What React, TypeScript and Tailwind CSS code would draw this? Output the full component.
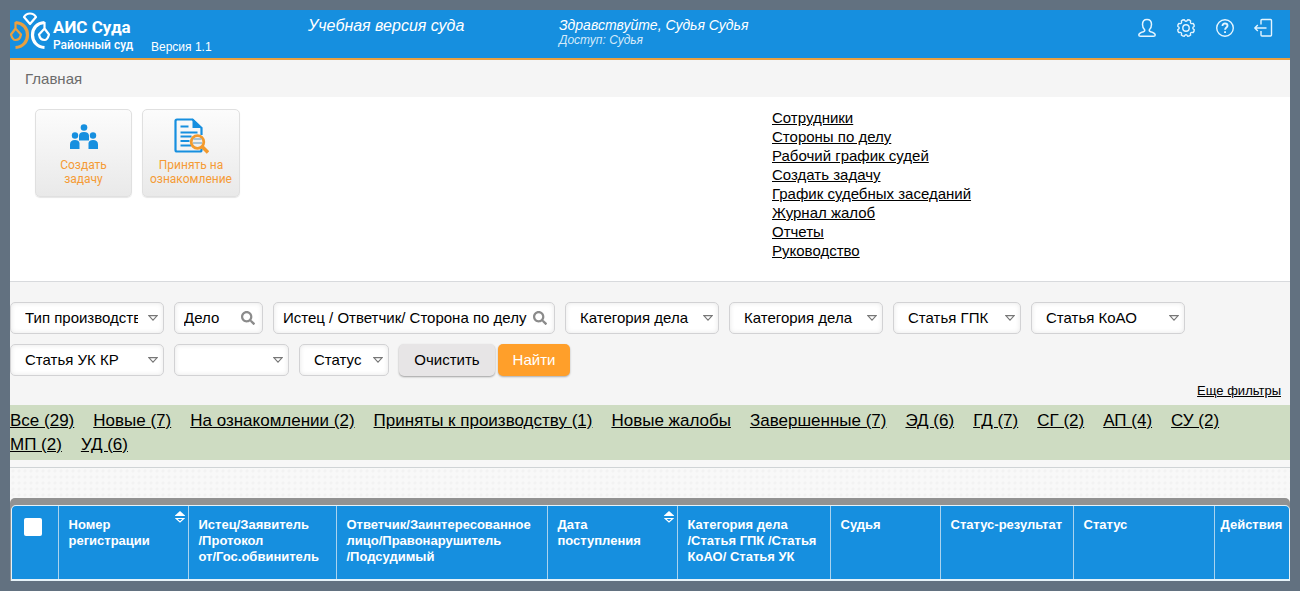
import React from "react";
import { FaSearch } from "react-icons/fa";

function Logo() {
  return (
    <svg viewBox="0 0 40 40" className="h-10 w-10 shrink-0" fill="none" strokeWidth="2.2" aria-hidden="true">
      <g stroke="#fff">
        <path d="M14 7q2-3.500 6-3.500T26 7l-6 7z" strokeLinejoin="round" />
        <path d="M34.500 12.500C27 13 22.500 18 22.500 25c0 6.500 4.500 12 12 12.500" strokeWidth="3.200" />
        <path d="M34.500 12v6.500l-5.500 6q1 5.500 5.500 5.500 3 0 4.500-5.500l-4.500-6" strokeLinejoin="round" />
      </g>
      <g stroke="#e9a040">
        <path d="M5.500 12.500C13 13 17.500 18 17.500 25c0 6.500-4.500 12-12 12.500" strokeWidth="3.200" />
        <path d="M5.500 12v6.500l5.500 6q-1 5.500-5.500 5.500-3 0-4.500-5.500l4.500-6" strokeLinejoin="round" />
      </g>
    </svg>
  );
}

const iconBox = "h-5 w-5";

function UserIcon() {
  return (
    <svg viewBox="0 0 20 20" className={iconBox} fill="none" stroke="currentColor" strokeWidth="1.500" strokeLinejoin="round" aria-hidden="true">
      <path d="M10 1.500C7 1.500 5.500 3.500 5.500 6.500c0 2.300.9 4.400 2.300 5.500.1 1-.3 1.400-1.300 1.700-2.700.8-4.700 1.500-4.700 3.300 0 .8.700 1.300 1.700 1.300h13c1 0 1.700-.5 1.700-1.300 0-1.800-2-2.500-4.700-3.300-1-.3-1.400-.7-1.300-1.700 1.400-1.100 2.300-3.200 2.300-5.500 0-3-1.500-5-4.500-5z" />
    </svg>
  );
}

function gearPath() {
  const parts: string[] = [];
  for (let i = 0; i < 8; i++) {
    const at = (deg: number, r: number) => {
      const a = ((i * 45 + deg + 22.5) * Math.PI) / 180;
      return `${(10 + r * Math.cos(a)).toFixed(2)} ${(10 + r * Math.sin(a)).toFixed(2)}`;
    };
    parts.push(`${i === 0 ? "M" : "L"}${at(-11, 8.4)} Q${at(0, 9)} ${at(11, 8.4)} Q${at(14, 6.8)} ${at(22.5, 6.8)} Q${at(31, 6.8)} ${at(34, 8.4)}`);
  }
  return parts.join(" ") + "Z";
}

function GearIcon() {
  return (
    <svg viewBox="0 0 20 20" className={iconBox} fill="none" stroke="currentColor" strokeWidth="1.400" strokeLinejoin="round" aria-hidden="true">
      <path d={gearPath()} />
      <circle cx="10" cy="10" r="3.200" />
    </svg>
  );
}

function HelpIcon() {
  return (
    <svg viewBox="0 0 20 20" className={iconBox} fill="none" stroke="currentColor" aria-hidden="true">
      <circle cx="10" cy="10" r="8.300" strokeWidth="1.400" />
      <path d="M7.500 8c0-1.600 1-2.500 2.500-2.500s2.500.9 2.500 2.200c0 1.800-2.400 1.900-2.400 4" strokeWidth="1.900" />
      <path d="M9.100 13.200h1.900v1.700h-1.900z" fill="currentColor" stroke="none" />
    </svg>
  );
}

function ExitIcon() {
  return (
    <svg viewBox="0 0 20 20" className={iconBox} fill="none" stroke="currentColor" strokeWidth="1.400" strokeLinejoin="round" aria-hidden="true">
      <path d="M7 6.500V2.500Q7 1.500 8 1.500h8.500q1 0 1 1v14.500q0 1-1 1H8q-1 0-1-1v-4" />
      <path d="M12.500 10H.800M3.800 7l-3 3 3 3" />
    </svg>
  );
}

function TeamIcon() {
  return (
    <svg viewBox="0 0 28 25" className="h-[25px] w-7" fill="#168fdf" aria-hidden="true">
      <circle cx="14" cy="3.500" r="3.300" />
      <path d="M9 16.500V12q0-4 5-4t5 4v4.500z" />
      <circle cx="5" cy="11.500" r="3.200" />
      <circle cx="23" cy="11.500" r="3.200" />
      <path d="M0 25v-4.500q0-4.500 5-4.500 4 0 4.500 3V25zM28 25v-4.500q0-4.500-5-4.500-4 0-4.500 3V25z" />
    </svg>
  );
}

function ReviewIcon() {
  return (
    <svg viewBox="0 0 36 36" className="h-9 w-9" fill="none" aria-hidden="true">
      <path d="M28.500 17V10l-9-8.500H4q-1.500 0-1.500 1.500v29q0 1.500 1.500 1.500h23q1.500 0 1.500-1.500v-1.500" stroke="#168fdf" strokeWidth="2.200" strokeLinejoin="round" />
      <path d="M19.500 0.500v9.500h10z" fill="#168fdf" />
      <path d="M7.500 8.500h8M7.500 14.500h17M7.500 18.500h11M7.500 23h9M7.500 27.500h11" stroke="#168fdf" strokeWidth="2" />
      <circle cx="24.500" cy="24" r="6.300" fill="#f0f0f0" stroke="#f39a2d" strokeWidth="2.800" />
      <path d="M29 28.500l6 6" stroke="#f39a2d" strokeWidth="3.600" />
      <path d="M20.500 21h8M20 25h9" stroke="#8fb4cc" strokeWidth="1.400" />
    </svg>
  );
}

function SortIcon() {
  return (
    <svg viewBox="0 0 10 12" className="h-3 w-2.5" aria-hidden="true">
      <path d="M5 0l5 4.500v.5H0v-.5z" fill="#fff" />
      <path d="M1.200 7.500h7.600L5 11z" fill="none" stroke="#fff" strokeWidth="1.200" />
    </svg>
  );
}

const fieldBox =
  "h-8 w-full rounded-[5px] border border-[#d2d2d4] bg-white text-[15px] text-black shadow-[inset_0_0_5px_rgba(0,0,0,0.1)] outline-none";

function SelectField({ label, text, width }: { label: string; text: string; width: string }) {
  return (
    <div className={`relative ${width}`}>
      <select aria-label={label} className={`${fieldBox} appearance-none pl-3.5 pr-[25px]`}>
        <option>{text}</option>
      </select>
      <svg viewBox="0 0 10 6" className="pointer-events-none absolute top-[13px] right-1.5 h-1.5 w-2.5" aria-hidden="true">
        <path d="M.8.600h8.400L5 5.200z" fill="#fff" stroke="#777" strokeWidth="1.100" />
      </svg>
    </div>
  );
}

function SearchField({ label, width }: { label: string; width: string }) {
  return (
    <div className={`relative ${width}`}>
      <input type="text" aria-label={label} placeholder={label} className={`${fieldBox} pb-0.5 pl-[9px] pr-6 placeholder:text-black placeholder:opacity-100`} />
      <FaSearch className="pointer-events-none absolute top-[9px] right-2 h-3.5 w-3.5 text-[#8b8b8b]" aria-hidden="true" />
    </div>
  );
}

function TaskCard({ icon, children, width }: { icon: React.ReactNode; children: React.ReactNode; width: string }) {
  return (
    <button
      type="button"
      className={`flex h-[88px] flex-col items-center rounded-[5px] border border-[#e0e0e0] bg-linear-to-b from-[#fcfcfc] to-[#e9e9e9] font-[Roboto,sans-serif] text-xs leading-[14px] text-[#f59b35] shadow-[0_1px_1px_rgba(0,0,0,0.1)] ${width}`}
    >
      <span className="flex h-12 items-center pt-1">{icon}</span>
      <span>{children}</span>
    </button>
  );
}

const quickLinks = [
  "Сотрудники",
  "Стороны по делу",
  "Рабочий график судей",
  "Создать задачу",
  "График судебных заседаний",
  "Журнал жалоб",
  "Отчеты",
  "Руководство",
];

const statusLinks = [
  "Все (29)",
  "Новые (7)",
  "На ознакомлении (2)",
  "Приняты к производству (1)",
  "Новые жалобы",
  "Завершенные (7)",
  "ЭД (6)",
  "ГД (7)",
  "СГ (2)",
  "АП (4)",
  "СУ (2)",
  "МП (2)",
  "УД (6)",
];

const columns: { lines: string[]; width: string; sortable?: boolean; tight?: boolean }[] = [
  { lines: ["Номер", "регистрации"], width: "w-[130px]", sortable: true },
  { lines: ["Истец/Заявитель", "/Протокол", "от/Гос.обвинитель"], width: "w-[148px]" },
  { lines: ["Ответчик/Заинтересованное", "лицо/Правонарушитель", "/Подсудимый"], width: "w-[211px]" },
  { lines: ["Дата", "поступления"], width: "w-[130px]", sortable: true },
  { lines: ["Категория дела", "/Статья ГПК /Статья", "КоАО/ Статья УК"], width: "w-[153px]" },
  { lines: ["Судья"], width: "w-[110px]" },
  { lines: ["Статус-результат"], width: "w-[133px]" },
  { lines: ["Статус"], width: "w-[141px]" },
  { lines: ["Действия"], width: "w-[75px]", tight: true },
];

export default function App() {
  return (
    <div className="min-h-screen bg-[#627180] p-2.5 font-['Liberation_Sans',Arial,sans-serif] text-black">
      <header className="flex h-[50px] border-b-2 border-[#e9a040] bg-[#168fdf] text-white">
        <a href="#" className="flex w-[141px] shrink-0 font-[Roboto,sans-serif] text-white">
          <Logo />
          <span className="flex flex-col pt-2 pl-[3px]">
            <span className="text-[17px] leading-[18px] font-bold whitespace-nowrap">АИС Суда</span>
            <span className="text-xs leading-[18px] font-medium whitespace-nowrap">Районный суд</span>
          </span>
        </a>
        <span className="w-[157px] shrink-0 pt-[29px] text-xs leading-4">Версия 1.1</span>
        <span className="w-[251px] shrink-0 pt-1.5 text-base leading-[19px] italic">Учебная версия суда</span>
        <div className="grow pt-[7px] italic">
          <p className="text-sm leading-4">Здравствуйте, Судья Судья</p>
          <p className="text-xs leading-[14px] text-[#d5eafa]">Доступ: Судья</p>
        </div>
        <nav className="flex gap-[19px] pt-2 pr-4 text-[#e4f5ff]">
          <button type="button" aria-label="Профиль" className={iconBox}><UserIcon /></button>
          <button type="button" aria-label="Настройки" className={iconBox}><GearIcon /></button>
          <button type="button" aria-label="Помощь" className={iconBox}><HelpIcon /></button>
          <button type="button" aria-label="Выход" className={iconBox}><ExitIcon /></button>
        </nav>
      </header>

      <main className="bg-[#f5f5f5]">
        <h1 className="h-[37px] pl-[15px] text-[15px] leading-[37px] text-[#6b6b6b]">Главная</h1>

        <section className="flex h-[185px] border-b border-[#d8dadd] bg-white pt-[11px]">
          <div className="flex w-[762px] shrink-0 gap-2.5 pt-px pl-[25px]">
            <TaskCard icon={<TeamIcon />} width="w-[97px]">
              Создать
              <br />
              задачу
            </TaskCard>
            <TaskCard icon={<ReviewIcon />} width="w-[98px]">
              Принять на
              <br />
              ознакомление
            </TaskCard>
          </div>
          <ul className="text-[15px] leading-[19px]">
            {quickLinks.map((link) => (
              <li key={link}>
                <a href="#" className="underline">{link}</a>
              </li>
            ))}
          </ul>
        </section>

        <section className="pt-5">
          <form className="flex flex-wrap gap-2.5" onSubmit={(e) => e.preventDefault()}>
            <SelectField label="Тип производства" text="Тип производства" width="w-[154px]" />
            <SearchField label="Дело" width="w-[89px]" />
            <SearchField label="Истец / Ответчик/ Сторона по делу" width="w-[282px]" />
            <SelectField label="Категория дела" text="Категория дела" width="w-[154px]" />
            <SelectField label="Категория дела, уточнение" text="Категория дела" width="w-[154px]" />
            <SelectField label="Статья ГПК" text="Статья ГПК" width="w-[128px]" />
            <SelectField label="Статья КоАО" text="Статья КоАО" width="w-[154px]" />
            <SelectField label="Статья УК КР" text="Статья УК КР" width="w-[154px]" />
            <SelectField label="Дополнительный фильтр" text="" width="w-[115px]" />
            <SelectField label="Статус" text="Статус" width="w-[90px]" />
            <div className="flex gap-[3px] text-[15px]">
              <button type="reset" className="h-8 w-24 rounded-[5px] bg-[#e7e5e6] shadow-[0_1px_2px_rgba(0,0,0,0.35)]">Очистить</button>
              <button type="submit" className="h-8 w-[72px] rounded-[5px] bg-[#ff9f2a] text-white shadow-[0_1px_2px_rgba(0,0,0,0.3)]">Найти</button>
            </div>
          </form>
          <div className="flex h-[29px] items-center justify-end pr-[9px] text-[13px]">
            <a href="#" className="underline">Еще фильтры</a>
          </div>
        </section>

        <nav className="flex flex-wrap gap-x-[19px] bg-[#cedcc2] pt-1 pr-2.5 pb-[3px] text-[17px] leading-6">
          {statusLinks.map((link) => (
            <a key={link} href="#" className="underline">{link}</a>
          ))}
        </nav>

        <div className="h-2 border-b border-[#d0d4d6] bg-[#f7f7f7]" />
        <div className="bg-[#f8f8f8] bg-[radial-gradient(circle,#f2f2f2_1px,transparent_2px)] bg-size-[6px_6px] pt-[30px]">
          <div className="rounded-t-[5px] bg-[#929292] pt-[7px] pl-px">
            <div className="overflow-hidden rounded-t-[5px] border border-b-2 border-[#e6f2f8] bg-[#168fdf]">
              <table className="w-full table-fixed text-left text-[13px] leading-4 font-bold text-white">
                <thead>
                  <tr className="h-[73px] align-top">
                    <th className="w-[46px] border-r border-[#a9d3ef] pt-3 pr-1 text-center">
                      <input
                        type="checkbox"
                        aria-label="Выбрать все"
                        className="h-[18px] w-[18px] appearance-none rounded-[2px] bg-white checked:border-4 checked:border-white checked:bg-[#168fdf]"
                      />
                    </th>
                    {columns.map((c) => (
                      <th
                        key={c.lines[0]}
                        className={`border-r border-[#a9d3ef] pt-[11px] whitespace-nowrap last:border-r-0 ${c.tight ? "pl-1.5" : "pl-2.5"} ${c.width}`}
                      >
                        <div className="flex justify-between">
                          <span>
                            {c.lines.map((line) => (
                              <span key={line} className="block">{line}</span>
                            ))}
                          </span>
                          {c.sortable && (
                            <button type="button" aria-label={`Сортировать: ${c.lines.join(" ")}`} className="-mt-1.5 mr-[3px] h-3">
                              <SortIcon />
                            </button>
                          )}
                        </div>
                      </th>
                    ))}
                  </tr>
                </thead>
              </table>
            </div>
          </div>
        </div>
      </main>
    </div>
  );
}
